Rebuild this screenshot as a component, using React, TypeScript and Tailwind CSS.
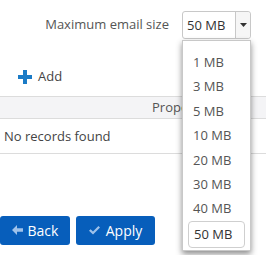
import React from 'react';

const sizes = ['1 MB', '3 MB', '5 MB', '10 MB', '20 MB', '30 MB', '40 MB', '50 MB'];

export default function App() {
  const selected = '50 MB';

  return (
    <div className="relative w-[266px] h-[255px] overflow-hidden bg-white text-[13px] text-[#4a4a4a] font-['Open_Sans',sans-serif]">
      {/* Setting row */}
      <div className="flex items-center justify-end gap-[13px] pr-[15px] pt-[11px]">
        <span className="text-[#555]">Maximum email size</span>
        <div className="flex h-[28px] w-[69px] rounded-[3px] border border-[#c8c8c8] bg-white">
          <span className="flex-1 pl-[4px] leading-[26px] text-[#333]">{selected}</span>
          <span className="flex w-[15px] items-center justify-center border-l border-[#c8c8c8] bg-[#f6f6f6] rounded-r-[3px]">
            <svg width="7" height="4" viewBox="0 0 7 4">
              <path d="M0 0h7L3.5 4z" fill="#333" />
            </svg>
          </span>
        </div>
      </div>

      {/* Add */}
      <div className="mt-[28px] flex items-center gap-[6px] pl-[18px]">
        <svg width="14" height="14" viewBox="0 0 14 14">
          <path d="M5 0h4v5h5v4H9v5H5V9H0V5h5z" fill="#1b7bc6" />
        </svg>
        <span className="text-[#444]">Add</span>
      </div>

      {/* Table */}
      <div className="mt-[9px]">
        <div className="h-[23px] border-y border-[#dcdcdc] bg-[#f4f4f6] pl-[152px] leading-[21px] text-[#555]">
          Properties
        </div>
        <div className="h-[35px] border-b border-[#dcdcdc] pl-[4px] leading-[35px] text-[#444]">
          No records found
        </div>
      </div>

      {/* Buttons */}
      <div className="mt-[62px] flex gap-[6px]">
        <button className="flex h-[29px] w-[70px] items-center justify-center gap-[5px] rounded-[3px] bg-[#075ebb] text-white text-[14px]">
          <svg width="11" height="10" viewBox="0 0 11 10">
            <path d="M5 0 0 5l5 5V6.8h6V3.2H5z" fill="#9fc2ea" />
          </svg>
          Back
        </button>
        <button className="flex h-[29px] w-[79px] items-center justify-center gap-[6px] rounded-[3px] bg-[#075ebb] text-white text-[14px]">
          <svg width="11" height="9" viewBox="0 0 11 9">
            <path d="M0 4.8 1.6 3.2 4 5.6 9.4 0 11 1.6 4 8.6z" fill="#9fc2ea" />
          </svg>
          Apply
        </button>
      </div>

      {/* Dropdown menu */}
      <div className="absolute left-[182px] top-[40px] w-[69px] border border-[#c8c8c8] bg-white pt-[9px] pb-[2px] shadow-[0_3px_6px_rgba(0,0,0,0.45)]">
        {sizes.map((s) =>
          s === selected ? (
            <div key={s} className="mx-[5px] h-[27px] rounded-[4px] border border-[#cfcfcf] pl-[5px] leading-[25px] text-[#333]">
              {s}
            </div>
          ) : (
            <div key={s} className="h-[24.4px] pl-[10px] leading-[24px] text-[#555]">
              {s}
            </div>
          )
        )}
      </div>
    </div>
  );
}
